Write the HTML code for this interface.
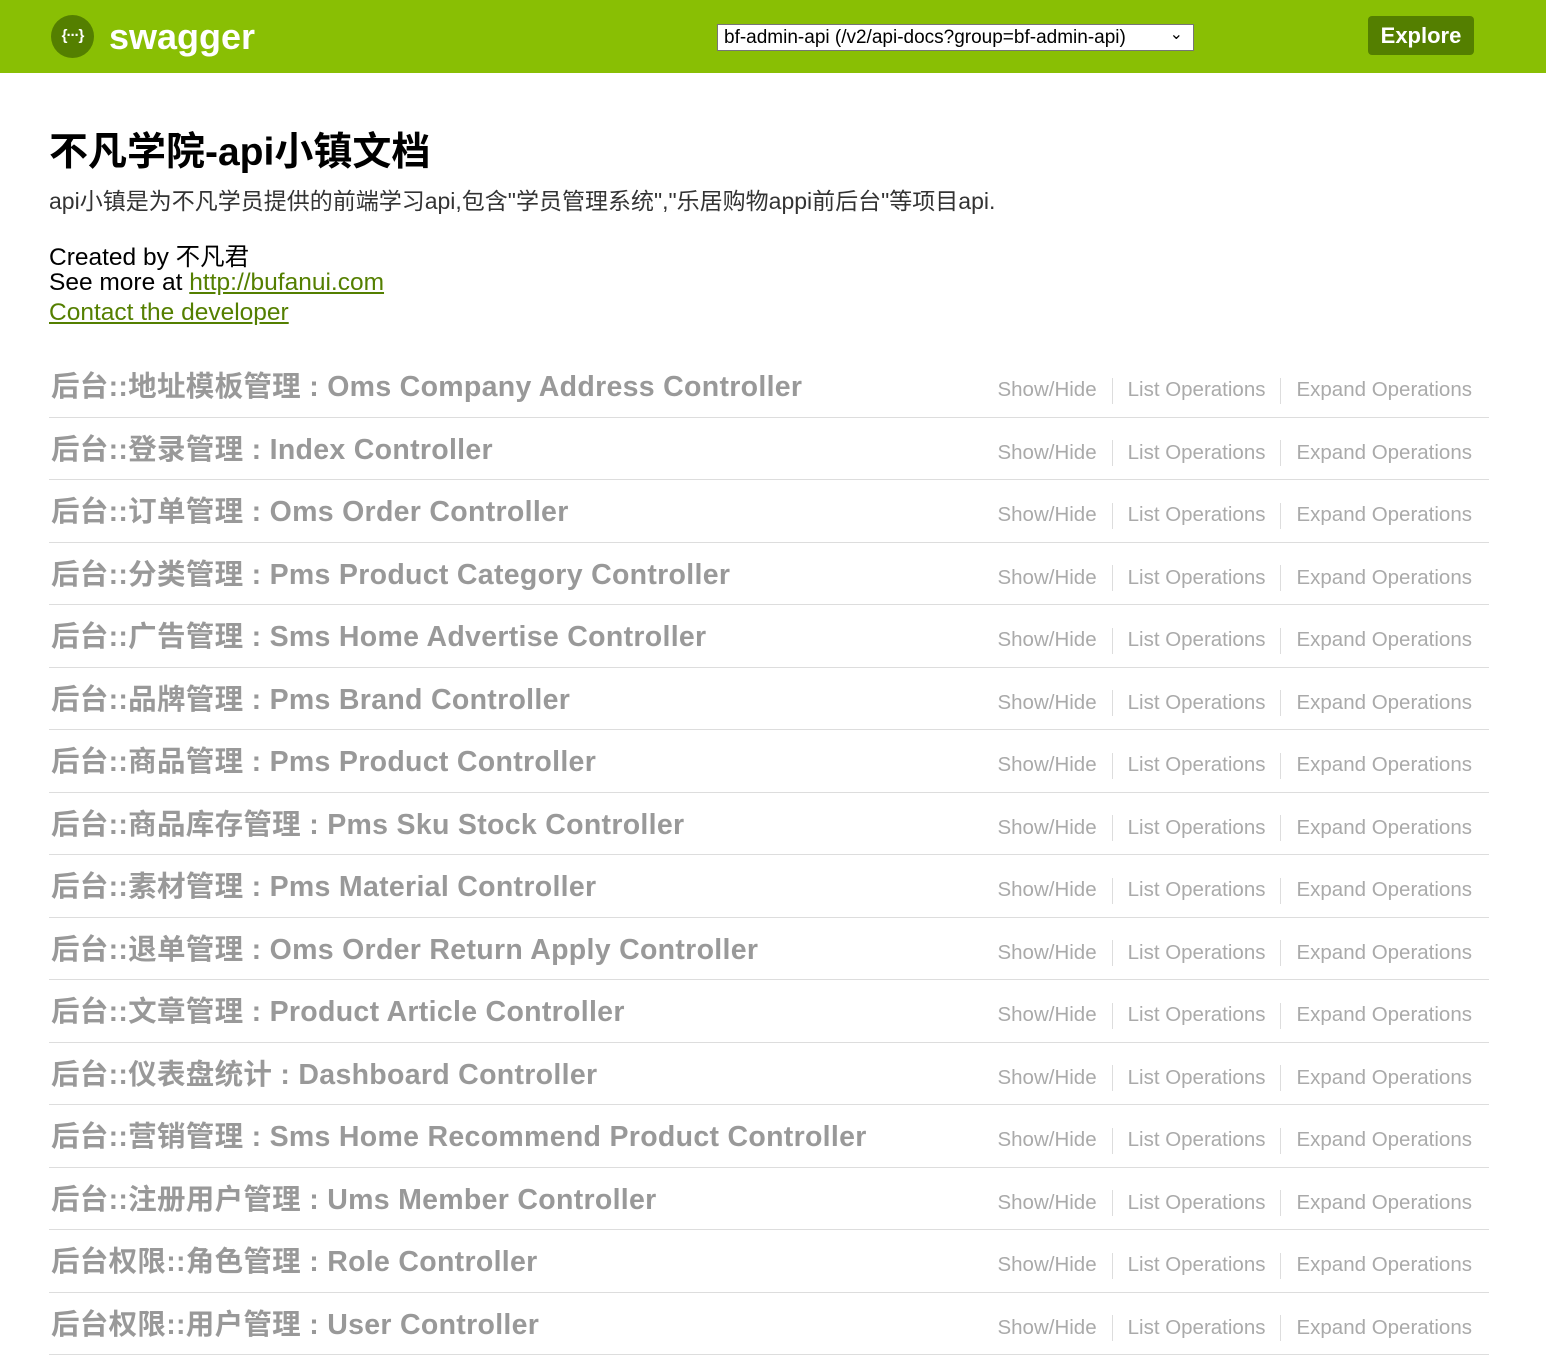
<!DOCTYPE html>
<html><head><meta charset="utf-8"><style>
*{margin:0;padding:0;box-sizing:border-box}
body{width:1546px;height:1330px;overflow:hidden;background:#fff;font-family:"Liberation Sans","Noto Sans CJK SC",sans-serif;position:relative}
.hdr{position:absolute;left:0;top:0;width:1546px;height:73px;background:#89bf04}
.logo{position:absolute;left:51px;top:15px;width:43px;height:43px;border-radius:50%;background:#547f00;color:#fff;font-size:15px;font-weight:bold;text-align:center;line-height:42px;letter-spacing:-1px}
.brand{position:absolute;left:109px;top:15px;color:#fff;font-size:36px;font-weight:bold;line-height:44px}
.sel{position:absolute;left:717px;top:24px;width:477px;height:27px;background:#fff;border:1px solid #767676;font-size:19px;line-height:25px;padding-left:6px;color:#000}
.sel span{position:absolute;right:10px;top:-3px;font-size:16px}
.exp{position:absolute;left:1368px;top:16px;width:106px;height:39px;background:#547f00;border-radius:4px;color:#fff;font-weight:bold;font-size:22px;text-align:center;line-height:39px}
h1{position:absolute;left:49px;top:128px;font-size:39px;font-weight:bold;color:#000;line-height:50px;white-space:nowrap}
.desc{position:absolute;left:49px;top:186px;font-size:23px;color:#333;line-height:30px;white-space:nowrap}
.info{position:absolute;left:49px;top:245px;font-size:24.5px;color:#000;line-height:25px}
.info a{color:#547f00;text-decoration:underline}
.row{position:absolute;left:49px;width:1440px;height:62.5px;border-bottom:1px solid #ddd}
.t{position:absolute;left:2px;top:12px;font-size:28.5px;letter-spacing:0.3px;font-weight:bold;color:#999;white-space:nowrap;line-height:40px}
.l{position:absolute;right:17px;top:21px;font-size:20.5px;color:#aaa;line-height:28px;white-space:nowrap}
.l i{font-style:normal;display:inline-block;border-left:1px solid #ddd;height:26px;vertical-align:middle;margin:0 15px}
</style></head><body>
<div class="hdr">
<div class="logo">{···}</div>
<div class="brand">swagger</div>
<div class="sel">bf-admin-api (/v2/api-docs?group=bf-admin-api)<span>&#8964;</span></div>
<div class="exp">Explore</div>
</div>
<h1>不凡学院-api小镇文档</h1>
<div class="desc">api小镇是为不凡学员提供的前端学习api,包含"学员管理系统","乐居购物appi前后台"等项目api.</div>
<div class="info">Created by 不凡君<br>See more at <a>http://bufanui.com</a><br><div style="margin-top:5px"><a>Contact the developer</a></div></div>

<div class="row" style="top:355px"><div class="t">后台::地址模板管理 : Oms Company Address Controller</div><div class="l">Show/Hide<i></i>List Operations<i></i>Expand Operations</div></div>
<div class="row" style="top:417.5px"><div class="t">后台::登录管理 : Index Controller</div><div class="l">Show/Hide<i></i>List Operations<i></i>Expand Operations</div></div>
<div class="row" style="top:480px"><div class="t">后台::订单管理 : Oms Order Controller</div><div class="l">Show/Hide<i></i>List Operations<i></i>Expand Operations</div></div>
<div class="row" style="top:542.5px"><div class="t">后台::分类管理 : Pms Product Category Controller</div><div class="l">Show/Hide<i></i>List Operations<i></i>Expand Operations</div></div>
<div class="row" style="top:605px"><div class="t">后台::广告管理 : Sms Home Advertise Controller</div><div class="l">Show/Hide<i></i>List Operations<i></i>Expand Operations</div></div>
<div class="row" style="top:667.5px"><div class="t">后台::品牌管理 : Pms Brand Controller</div><div class="l">Show/Hide<i></i>List Operations<i></i>Expand Operations</div></div>
<div class="row" style="top:730px"><div class="t">后台::商品管理 : Pms Product Controller</div><div class="l">Show/Hide<i></i>List Operations<i></i>Expand Operations</div></div>
<div class="row" style="top:792.5px"><div class="t">后台::商品库存管理 : Pms Sku Stock Controller</div><div class="l">Show/Hide<i></i>List Operations<i></i>Expand Operations</div></div>
<div class="row" style="top:855px"><div class="t">后台::素材管理 : Pms Material Controller</div><div class="l">Show/Hide<i></i>List Operations<i></i>Expand Operations</div></div>
<div class="row" style="top:917.5px"><div class="t">后台::退单管理 : Oms Order Return Apply Controller</div><div class="l">Show/Hide<i></i>List Operations<i></i>Expand Operations</div></div>
<div class="row" style="top:980px"><div class="t">后台::文章管理 : Product Article Controller</div><div class="l">Show/Hide<i></i>List Operations<i></i>Expand Operations</div></div>
<div class="row" style="top:1042.5px"><div class="t">后台::仪表盘统计 : Dashboard Controller</div><div class="l">Show/Hide<i></i>List Operations<i></i>Expand Operations</div></div>
<div class="row" style="top:1105px"><div class="t">后台::营销管理 : Sms Home Recommend Product Controller</div><div class="l">Show/Hide<i></i>List Operations<i></i>Expand Operations</div></div>
<div class="row" style="top:1167.5px"><div class="t">后台::注册用户管理 : Ums Member Controller</div><div class="l">Show/Hide<i></i>List Operations<i></i>Expand Operations</div></div>
<div class="row" style="top:1230px"><div class="t">后台权限::角色管理 : Role Controller</div><div class="l">Show/Hide<i></i>List Operations<i></i>Expand Operations</div></div>
<div class="row" style="top:1292.5px"><div class="t">后台权限::用户管理 : User Controller</div><div class="l">Show/Hide<i></i>List Operations<i></i>Expand Operations</div></div>
</body></html>
